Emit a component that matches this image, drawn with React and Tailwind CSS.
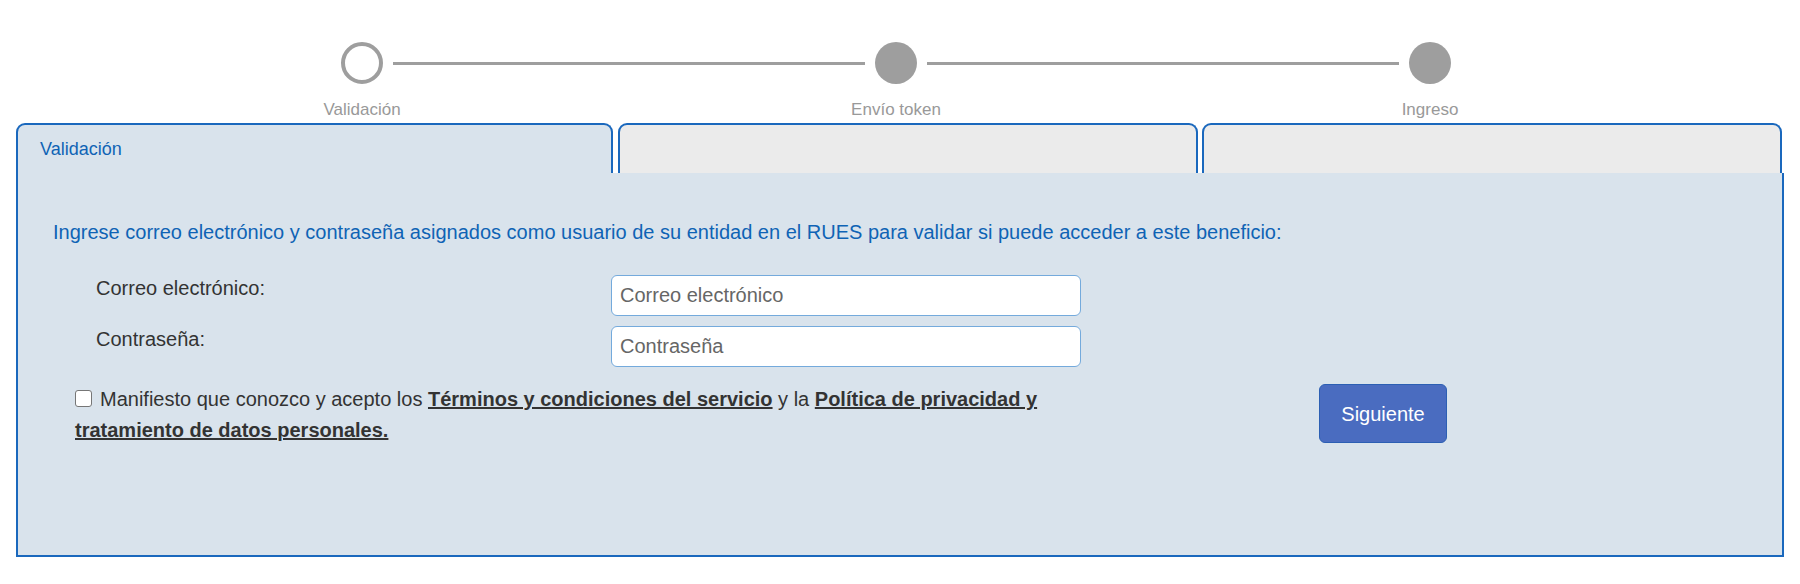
import { useState } from 'react';

const steps = ['Validación', 'Envío token', 'Ingreso'];

function StepCircle({ current }) {
  if (current) {
    return <div className="w-[42px] h-[42px] rounded-full border-[4px] border-[#9e9e9e] bg-white shrink-0" />;
  }
  return <div className="w-[42px] h-[42px] rounded-full bg-[#9e9e9e] shrink-0" />;
}

export default function App() {
  const [email, setEmail] = useState('');
  const [password, setPassword] = useState('');
  const [accepted, setAccepted] = useState(false);

  return (
    <div className="min-h-screen bg-white font-['Liberation_Sans',Arial,sans-serif] pt-[42px]">
      {/* stepper */}
      <div className="ml-[341px] w-[1110px] flex items-center">
        <StepCircle current />
        <div className="flex-1 h-[3px] bg-[#9e9e9e] mx-[10px]" />
        <StepCircle />
        <div className="flex-1 h-[3px] bg-[#9e9e9e] mx-[10px]" />
        <StepCircle />
      </div>
      <div className="ml-[95px] w-[1602px] grid grid-cols-3 mt-[16px] text-[17px] leading-[20px] text-[#999] text-center">
        {steps.map((s) => (
          <span key={s}>{s}</span>
        ))}
      </div>

      {/* tabs */}
      <div className="mx-[16px] mt-[3px] flex">
        <div className="w-[597px] h-[50px] border-2 border-b-0 border-[#1a68bd] rounded-t-[9px] bg-[#d9e3ec] flex items-center pl-[22px] text-[18px] text-[#0f63b5]">
          Validación
        </div>
        <div className="w-[580px] h-[50px] ml-[5px] border-2 border-b-0 border-[#1a68bd] rounded-t-[9px] bg-[#ebebeb]" />
        <div className="w-[580px] h-[50px] ml-[4px] border-2 border-b-0 border-[#1a68bd] rounded-t-[9px] bg-[#ebebeb]" />
      </div>

      {/* panel */}
      <div className="mx-[16px] h-[384px] border-2 border-t-0 border-[#1a68bd] bg-[#d9e3ec] pt-[47px]">
        <p className="pl-[35px] text-[20px] leading-[24px] text-[#0f63b5]">
          Ingrese correo electrónico y contraseña asignados como usuario de su entidad en el RUES para validar si puede acceder a este beneficio:
        </p>

        <div className="mt-[31px] pl-[78px] flex items-start">
          <label className="w-[515px] pt-[1px] text-[20px] leading-[24px] text-[#333]">Correo electrónico:</label>
          <input
            type="text"
            value={email}
            onChange={(e) => setEmail(e.target.value)}
            placeholder="Correo electrónico"
            className="w-[470px] h-[41px] border border-[#74aadc] rounded-[6px] bg-white px-[8px] text-[20px] text-[#333] placeholder:text-[#666] outline-none"
          />
        </div>
        <div className="mt-[10px] pl-[78px] flex items-start">
          <label className="w-[515px] pt-[1px] text-[20px] leading-[24px] text-[#333]">Contraseña:</label>
          <input
            type="password"
            value={password}
            onChange={(e) => setPassword(e.target.value)}
            placeholder="Contraseña"
            className="w-[470px] h-[41px] border border-[#74aadc] rounded-[6px] bg-white px-[8px] text-[20px] text-[#333] placeholder:text-[#666] outline-none"
          />
        </div>

        <div className="mt-[17px] pl-[57px] flex items-start">
          <label className="w-[990px] text-[20px] leading-[31px] text-[#333]">
            <input
              type="checkbox"
              checked={accepted}
              onChange={(e) => setAccepted(e.target.checked)}
              className="appearance-none w-[17px] h-[17px] border border-[#767676] rounded-[3px] bg-white align-[-1px] mr-[8px] checked:bg-[#1a68bd]"
            />
            Manifiesto que conozco y acepto los{' '}
            <a href="#" className="font-bold underline">Términos y condiciones del servicio</a> y la{' '}
            <a href="#" className="font-bold underline">Política de privacidad y tratamiento de datos personales.</a>
          </label>
          <button className="ml-[254px] w-[128px] h-[59px] bg-[#4a6cc0] border border-[#2c5fb3] rounded-[6px] text-white text-[20px]">
            Siguiente
          </button>
        </div>
      </div>
    </div>
  );
}
